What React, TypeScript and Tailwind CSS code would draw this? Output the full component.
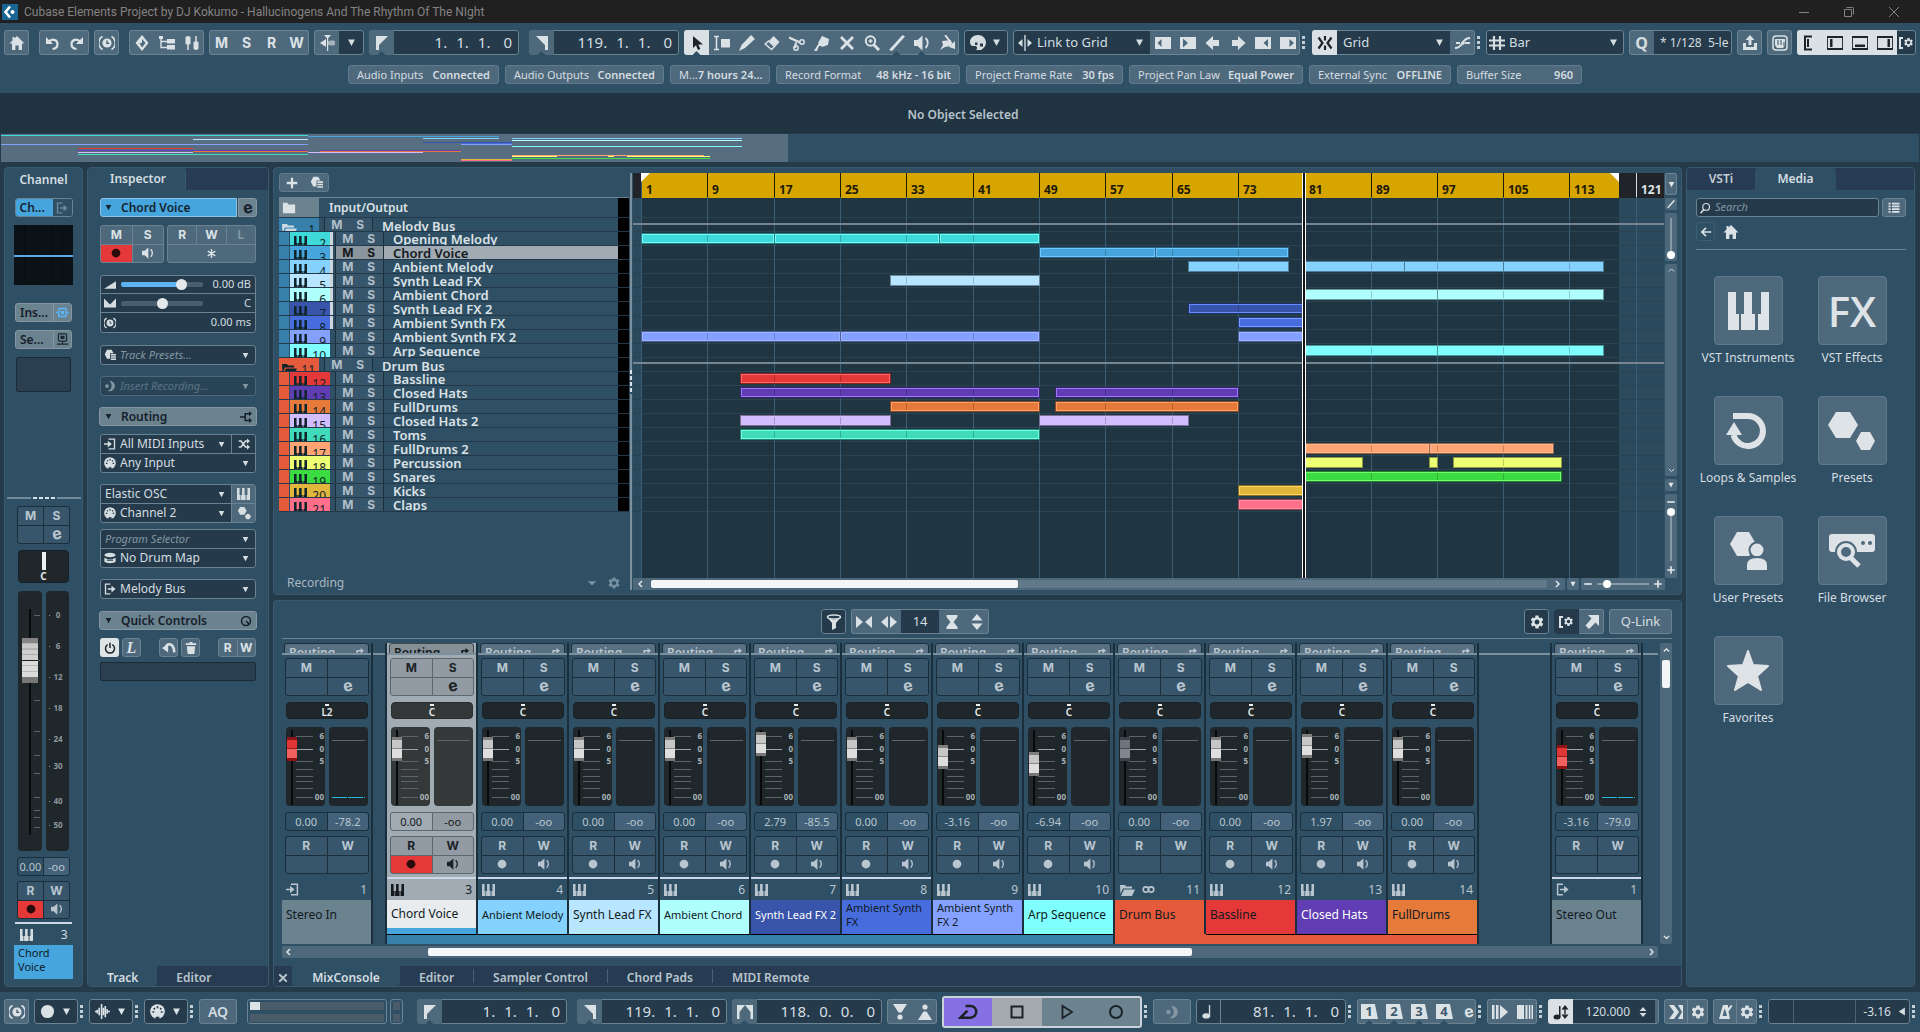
import React from 'react';
import { MdSettings } from 'react-icons/md';

/* ------------------------------------------------------------------ */
/* Icons                                                               */
/* ------------------------------------------------------------------ */

const line = { fill: 'none', stroke: 'currentColor' };

const ICONS: Record<string, React.ReactNode> = {
  home: <path d="M8 1l7.500 7.500H13V15H9.600v-4.500H6.400V15H3V8.500H.5L3.500 5.500V2H5.500v1.500z" />,
  undo: (
    <>
      <path d="M2 2v7h7L6.600 6.600 3 3z" />
      <path d="M5 7c2-3.500 8.500-3 8.500 2 0 3-2 4.800-5 5" strokeWidth="2.200" {...line} />
    </>
  ),
  redo: (
    <>
      <path d="M14 2v7H7l2.400-2.400L13 3z" />
      <path d="M11 7C9 3.500 2.500 4 2.500 9c0 3 2 4.800 5 5" strokeWidth="2.200" {...line} />
    </>
  ),
  delay: (
    <>
      <circle cx="8" cy="8" r="4.600" />
      <path d="M8 5.500V8.300h2.200" stroke="#344f61" fill="none" strokeWidth="1.200" />
      <path d="M3.500 1.500a7.500 7.500 0 0 0 0 13M12.500 1.500a7.500 7.500 0 0 1 0 13" strokeWidth="1.700" {...line} />
    </>
  ),
  diamond: <path fillRule="evenodd" d="M8 0l6.500 8L8 16 1.500 8zM8 4v4L5.500 8 8 12.500 11.500 8z" />,
  tree: (
    <>
      <path d="M8 4h8v4.500H8zM8 10h8v4.500H8zM0 1h4v3H0z" />
      <path d="M2 3v9.500h6M2 6.500h6" strokeWidth="1.400" {...line} />
    </>
  ),
  mixer: (
    <>
      <path d="M4 1v14M12 1v14" strokeWidth="1.500" {...line} />
      <rect x="1.500" y="1.500" width="5" height="8" rx="1" />
      <rect x="9.500" y="6.500" width="5" height="8" rx="1" />
    </>
  ),
  autoscroll: (
    <>
      <path d="M7 4v8L1 8zM5 0h7L8.500 4zM8 3h1.200v13H8z" />
      <path d="M10 6v4M12 5.500v5M14 5.500v5M16 6v4" strokeWidth="1.200" {...line} />
    </>
  ),
  left: <path d="M2 1h12L5 10v5H2z" />,
  right: <path d="M14 1H2l9 9v5h3z" />,
  arrow: <path d="M4 1v12l3-2.800 2 4.800 2.300-1-2-4.600H14z" />,
  range: (
    <>
      <path d="M0 1.500h5M0 14.500h5M2.500 1.500v13" strokeWidth="1.600" {...line} />
      <path d="M7 4h9v8.500H7z" />
    </>
  ),
  pencil: <path d="M12 0l4 4L6 13 0 16l2.500-6z" />,
  eraser: (
    <>
      <path d="M9.500 1 15.500 7l-4 4.500-6.500-5.500z" />
      <path d="M4.500 6 10.500 11.500 7.500 14.500 1.200 9z" strokeWidth="1.500" {...line} />
    </>
  ),
  scissors: (
    <>
      <path d="M0 2.500l11 5M7 7.500 6 13" strokeWidth="2.200" {...line} />
      <circle cx="13" cy="7" r="2.200" strokeWidth="1.500" {...line} />
      <circle cx="7" cy="13" r="2.200" strokeWidth="1.500" {...line} />
    </>
  ),
  glue: <path d="M8 1l7 3-1 6-6 2-4-4zM5 8l3 3-3 0-2 5H0l3-5z" />,
  mute: <path d="M3 1 8 6l5-5 2 2L10 8l5 5-2 2L8 10l-5 5-2-2L6 8 1 3z" />,
  zoom: (
    <>
      <circle cx="6.500" cy="6" r="4.700" strokeWidth="2" {...line} />
      <path d="M9.500 9.500 15 15" strokeWidth="3" {...line} />
      <path d="M6.500 4v4M4.500 6h4" strokeWidth="1.500" {...line} />
    </>
  ),
  draw: <path d="M0 15 13.500 0 16 1.500 3 16z" />,
  speaker: (
    <>
      <path d="M0 5h3.500l5-4.500v15l-5-4.500H0z" />
      <path d="M11.500 3c3 2.500 3 7.500 0 10" strokeWidth="1.800" {...line} />
    </>
  ),
  warp: (
    <>
      <path d="M3 6l9-1 0 6-6 1-5 3 3-5z" />
      <path d="M6 0l7 9" strokeWidth="2" {...line} />
      <path d="M16 6v8l-6-2z" />
    </>
  ),
  palette: (
    <path
      fillRule="evenodd"
      d="M8 0c4.500 0 8 3.500 8 7.500 0 3-2 5.500-5 7.500H6c1.500-1 1.500-3 0-4H3c-2 0-3-2-3-4C0 3 3.500 0 8 0zM10 8.500v3h3v-3zM5 7.500V10h2.500V7.500z"
    />
  ),
  link: <path d="M5.500 4v8L1 8zM7.300 0h1.400v16H7.300zM10.500 4v8L15 8z" />,
  nudge1: <path fillRule="evenodd" d="M0 2h16v12H0zM2.500 8l4 4V4z" />,
  nudge2: <path fillRule="evenodd" d="M0 2h16v12H0zM8 8 3 3.500v9z" />,
  nudge3: <path d="M.5 8 8 1v4h6v6H8v4z" />,
  nudge4: <path d="M15.500 8 8 1v4H2v6h6v4z" />,
  nudge5: <path fillRule="evenodd" d="M0 2h16v12H0zM8.500 8l4.500 4V4z" />,
  nudge6: <path fillRule="evenodd" d="M0 2h16v12H0zM14 8 9.500 4v8z" />,
  snap: (
    <>
      <path d="M1.500 2.500 5.500 8l-4 5.500M14.500 2.500 10.500 8l4 5.500" strokeWidth="2.200" {...line} />
      <path d="M8 1v4.500M8 10.500V15" strokeWidth="2.200" {...line} />
    </>
  ),
  curve: (
    <>
      <path d="M0 13c9 0 6-10 15-10M1 8h4M10 8h5" strokeWidth="2" {...line} />
      <circle cx="8" cy="8" r="1.800" />
    </>
  ),
  hash: <path d="M5 1v14M11 1v14M0 5.500h16M0 10.500h16" strokeWidth="2.200" {...line} />,
  share: (
    <>
      <path d="M8 0l4.500 5h-3v5h-3V5h-3z" />
      <path d="M1 8h3v4h8V8h3v7H1z" />
    </>
  ),
  setup: (
    <>
      <rect x="1" y="1" width="14" height="14" rx="3" strokeWidth="1.500" {...line} />
      <path d="M3 4h10v6l-2 3H5l-2-3z" />
      <path d="M6 5v5M9 5v5M12 7v4" stroke="#4f697c" fill="none" strokeWidth="1.200" />
    </>
  ),
  zoneCh: <path d="M10 1.500H3v13h7M6 4v8" strokeWidth="2" {...line} />,
  zoneL: (
    <>
      <path d="M0 2h16v12H0z" strokeWidth="1.800" {...line} />
      <path d="M3 4h2.500v8H3z" />
    </>
  ),
  zoneB: (
    <>
      <path d="M0 2h16v12H0z" strokeWidth="1.800" {...line} />
      <path d="M3 9.500h10V12H3z" />
    </>
  ),
  zoneR: (
    <>
      <path d="M0 2h16v12H0z" strokeWidth="1.800" {...line} />
      <path d="M10.500 4H13v8h-2.500z" />
    </>
  ),
  caret: <path d="M3 3.500h10L8 13z" />,
  caretWide: <path d="M1 5h14l-7 7z" />,
  plus: <path d="M6.700 2h2.600v4.700H14v2.600H9.300V14H6.700V9.300H2V6.700h4.700z" />,
  minus: <path d="M2 6.700h12v2.600H2z" />,
  presetAdd: (
    <>
      <path d="M4 1h6l3 4.500H8V13H4L1 7z" />
      <path d="M9 6.500h7V8.500H9zM9 9.500h7v2H9zM9 12.500h7v2H9z" />
    </>
  ),
  folder: <path d="M1 2h5l1.500 2H15v10H1z" />,
  folderOpen: (
    <>
      <path d="M1 3h5l1 1.500h6V6.500H4L1.500 12z" />
      <path d="M5 7.500h11L13 14H2z" />
    </>
  ),
  exit: (
    <>
      <path d="M8.500 1.500H2v13h6.500" strokeWidth="1.800" {...line} />
      <path d="M5 7h5V3.500L15.500 8 10 12.500V9H5z" />
    </>
  ),
  enter: (
    <>
      <path d="M6 1.500h8v13H6" strokeWidth="1.800" {...line} />
      <path d="M0 7h5V3.500L10.500 8 5 12.500V9H0z" />
    </>
  ),
  insert: (
    <>
      <rect x="3.500" y="3" width="9" height="10" rx="1" strokeWidth="1.800" {...line} />
      <path d="M6 6h4v4H6zM0 7h2v2H0zM14 7h2v2h-2z" />
    </>
  ),
  send: (
    <>
      <rect x="3" y="1" width="10" height="9" rx="1" strokeWidth="1.500" {...line} />
      <path d="M5.500 3.500h5v4h-5zM7.300 10h1.400v3H7.300zM1 13h14v1.500H1z" />
    </>
  ),
  star6: <path d="M8 1.500v13M2.500 4.500l11 7M13.500 4.500l-11 7" strokeWidth="2" {...line} />,
  ramp: <path d="M0 13 16 3v10z" />,
  pan: <path d="M0 2l8 8 8-8v12H0z" />,
  shuffle: (
    <>
      <path d="M1 4h3l6 8h3M1 12h3l6-8h3" strokeWidth="2" {...line} />
      <path d="M12 .5l4 3.500-4 3.500zM12 8.500l4 3.500-4 3.500z" />
    </>
  ),
  route: (
    <>
      <path d="M0 8h6M13 3.500H7v9h6" strokeWidth="2" {...line} />
      <path d="M12 0l4 3.500-4 3.500zM12 9l4 3.500-4 3.500z" />
    </>
  ),
  routeSmall: (
    <>
      <path d="M1 14h5V7h6" strokeWidth="2.200" {...line} />
      <path d="M11 3l5 4-5 4z" />
    </>
  ),
  midi: (
    <>
      <circle cx="8" cy="8" r="7.800" />
      <path d="M2.500 8.500h2M11.500 8.500h2M4 4.500l1.200 1.200M12 4.500l-1.200 1.200M8 2.500v2" stroke="#253b4b" strokeWidth="1.800" />
      <path d="M6 13.500h4V16H6z" fill="#253b4b" />
    </>
  ),
  presets: (
    <>
      <path d="M3.500 1h5L11 5.500 8.500 10h-5L1 5.500z" />
      <path d="M11 9h3l2 3-2 3h-3l-2-3z" />
    </>
  ),
  drum: (
    <>
      <ellipse cx="8" cy="4" rx="7.500" ry="3" />
      <path d="M.5 7.500c3 2.500 12 2.500 15 0V13c-3 2.500-12 2.500-15 0z" />
      <path d="M4 10h8v1.500H4z" fill="#253b4b" />
    </>
  ),
  knob: (
    <>
      <circle cx="8" cy="8" r="6" strokeWidth="2" {...line} />
      <path d="M8 8l4 4" strokeWidth="2.200" {...line} />
    </>
  ),
  power: <path d="M5 3.500a6 6 0 1 0 6 0M8 1v7" strokeWidth="2" {...line} />,
  back: (
    <>
      <path d="M0 8 7 3.500V13z" />
      <path d="M4.500 8c0-6 9-7 9.500 5" strokeWidth="3" {...line} />
    </>
  ),
  trash: <path d="M6 0h4v1.500h5v2.500H1V1.500h5zM2.500 5.500h11L12.500 16h-9z" />,
  insertRec: (
    <>
      <path d="M7 1a7 7 0 1 1-2 13.500c4-1.500 5-4 5-6.500S9 2.500 7 1z" />
      <circle cx="4" cy="8" r="2.500" />
    </>
  ),
  filter: (
    <>
      <ellipse cx="8" cy="3" rx="6.500" ry="2" strokeWidth="1.500" {...line} />
      <path d="M1.500 3.500 6 9v7l4-2V9l4.500-5.500L8 6z" />
    </>
  ),
  narrow: <path d="M0 2v12l7-6zM16 2v12L9 8z" />,
  widen: <path d="M7 2v12L0 8zM9 2v12l7-6z" />,
  hourglass: <path d="M2.500 1h11v2L9.500 8l4 5v2h-11v-2l4-5-4-5z" />,
  updown: <path d="M8 0l5.500 6.500h-11zM8 16l5.500-6.500h-11z" />,
  popout: <path d="M4 1h11v11l-3.500-3.500L5 15l-3.500-3.500L7.500 4.500z" />,
  search: (
    <>
      <circle cx="9.500" cy="6.500" r="4.500" strokeWidth="1.600" {...line} />
      <path d="M6.500 10 2 15" strokeWidth="2.200" {...line} />
    </>
  ),
  list: <path d="M0 1h3v2.500H0zM5 1h11v2.500H5zM0 5h3v2.500H0zM5 5h11v2.500H5zM0 9h3v2.500H0zM5 9h11v2.500H5zM0 13h3v2.500H0zM5 13h11v2.500H5z" />,
  arrowLeft: <path d="M15 8H3M8 2.500 2.500 8 8 13.500" strokeWidth="2.200" {...line} />,
  close: <path d="M2 2l12 12M14 2 2 14" strokeWidth="3" {...line} />,
  circle: <circle cx="8" cy="8" r="7" />,
  wave: <path d="M0 8h2M2.500 6v4M4.500 4v8M7 0v16M9 4v8M11 2v12M13 5.500v5M14 8h2" strokeWidth="1.700" {...line} />,
  both: <path d="M0 1h8L2.500 8v7H0zM16 1H8l5.500 7v7H16z" />,
  punchIn: (
    <>
      <path d="M1 0h14l-5.500 8.500h-3z" />
      <circle cx="8" cy="13" r="2.600" />
    </>
  ),
  punchOut: (
    <>
      <path d="M1 16h14L9.500 7.500h-3z" />
      <circle cx="8" cy="3" r="2.600" />
    </>
  ),
  cycle: <path d="M6 3.200h4a4.600 4.600 0 0 1 0 9.300H2L7.500 7" strokeWidth="2" {...line} />,
  stop: <path d="M2.500 2.500h11v11h-11z" strokeWidth="2" {...line} />,
  play: <path d="M3.500 2v12L13 8z" strokeWidth="1.800" {...line} />,
  record: <circle cx="8" cy="8" r="6" strokeWidth="2" {...line} />,
  note: (
    <>
      <ellipse cx="6" cy="12.500" rx="4.500" ry="3" />
      <path d="M9 0h1.500v13H9z" />
    </>
  ),
  markPlay: <path d="M0 1h2.500v14H0zM4 1h2.500v14H4zM8 1l8 7-8 7z" />,
  markBars: <path d="M0 1h7v14H0zM8.500 1h2v14h-2zM11.800 1h1.600v14h-1.600zM14.500 1H16v14h-1.500z" />,
  tempo: (
    <>
      <ellipse cx="4" cy="13" rx="3.500" ry="2.500" />
      <path d="M6 2h1.500v11H6zM12 1l3.500 4.500h-7zM12 15l3.500-4.500h-7zM11.300 5h1.400v6h-1.400z" />
    </>
  ),
  precount: <path d="M1 1h5l5 7-5 7H1l5-7zM10 1h5v14h-5l4-7z" />,
  metronome: <path fillRule="evenodd" d="M6 1h5v3l3-3 1.500 1-4 5.500L13 15H2zM7.500 4.500 5.500 12h4.500L9 8z" />,
  tri: <path d="M14 1v14L3 8z" />,
  infinity: (
    <>
      <circle cx="4.800" cy="8" r="3.300" strokeWidth="2" {...line} />
      <circle cx="11.200" cy="8" r="3.300" strokeWidth="2" {...line} />
    </>
  ),
};

function Icon({ name, className = 'size-4' }: { name: string; className?: string }) {
  if (name === 'gear') return <MdSettings className={`shrink-0 ${className}`} aria-hidden="true" />;
  if (name === 'zoneGear') {
    return (
      <span className="flex items-center" aria-hidden="true">
        <span className="h-3 w-1 border-2 border-r-0 border-current" />
        <MdSettings className="size-[11px] shrink-0" />
      </span>
    );
  }
  return (
    <svg viewBox="0 0 16 16" className={`shrink-0 ${className}`} fill="currentColor" aria-hidden="true">
      {ICONS[name]}
    </svg>
  );
}

function Piano({ className }: { className: string }) {
  return (
    <svg viewBox="0 0 41 38" preserveAspectRatio="none" className={`shrink-0 ${className}`} fill="currentColor" aria-hidden="true">
      <path d="M0 0h8v22h3v16H0zM16 0h8v22h3v16H13V22h3zM33 0h8v38H30V22h3z" />
    </svg>
  );
}

/* ------------------------------------------------------------------ */
/* Data                                                                */
/* ------------------------------------------------------------------ */

interface Track {
  n: number;
  name: string;
  color: string;
  edge?: string;
  bus?: boolean;
  out?: boolean;
  clips: [number, number][];
}

const TRACKS: Track[] = [
  { n: 1, name: 'Melody Bus', color: '#3680ab', bus: true, clips: [] },
  { n: 2, name: 'Opening Melody', color: '#40d9d9', edge: '#73fafa', out: true, clips: [[1, 17], [17, 37], [37, 49]] },
  { n: 3, name: 'Chord Voice', color: '#47a5de', edge: '#70c8ff', out: true, clips: [[49, 63], [63, 79]] },
  { n: 4, name: 'Anbient Melody', color: '#85d2ff', edge: '#85d2ff', out: true, clips: [[67, 79], [81, 93], [93, 105], [105, 117]] },
  { n: 5, name: 'Synth Lead FX', color: '#b8e5ff', edge: '#b8e5ff', out: true, clips: [[31, 49]] },
  { n: 6, name: 'Ambient Chord', color: '#b0ffff', edge: '#b0ffff', out: true, clips: [[81, 97], [97, 117]] },
  { n: 7, name: 'Synth Lead FX 2', color: '#3855ab', edge: '#668aff', out: true, clips: [[67, 81]] },
  { n: 8, name: 'Ambient Synth FX', color: '#476cde', edge: '#7a9cff', out: true, clips: [[73, 81]] },
  { n: 9, name: 'Ambient Synth FX 2', color: '#85a1ff', edge: '#9db4ff', clips: [[1, 25], [25, 49], [73, 81]] },
  { n: 10, name: 'Arp Sequence', color: '#80ffff', edge: '#80ffff', clips: [[81, 97], [97, 117]] },
  { n: 11, name: 'Drum Bus', color: '#e55a3b', bus: true, clips: [] },
  { n: 12, name: 'Bassline', color: '#e53838', edge: '#ff6b6b', clips: [[13, 31]] },
  { n: 13, name: 'Closed Hats', color: '#613db3', edge: '#9d75ff', clips: [[13, 49], [51, 73]] },
  { n: 14, name: 'FullDrums', color: '#e57a3b', edge: '#ffa36b', clips: [[31, 49], [51, 73]] },
  { n: 15, name: 'Closed Hats 2', color: '#d2bdff', edge: '#d2bdff', clips: [[13, 31], [49, 67]] },
  { n: 16, name: 'Toms', color: '#40dbba', edge: '#70ffe0', clips: [[13, 49]] },
  { n: 17, name: 'FullDrums 2', color: '#ffa573', edge: '#ffb68c', clips: [[81, 96], [96, 111]] },
  { n: 18, name: 'Percussion', color: '#edff73', edge: '#edff73', clips: [[81, 88], [96, 97], [99, 112]] },
  { n: 19, name: 'Snares', color: '#3bdb42', edge: '#6fff70', clips: [[81, 112]] },
  { n: 20, name: 'Kicks', color: '#e0b63b', edge: '#ffd466', clips: [[73, 81]] },
  { n: 21, name: 'Claps', color: '#ff6f8a', edge: '#ff8fa5', clips: [[73, 81]] },
];

const BAR_LABELS = [1, 9, 17, 25, 33, 41, 49, 57, 65, 73, 81, 89, 97, 105, 113, 121];

// canvas x of a bar line
const barX = (bar: number) => 8 + Math.round((bar - 1) * 8.29);
const overX = (bar: number) => Math.round((bar - 1) * 6.388);

interface Strip {
  n: number;
  name: string;
  color: string;
  text?: string;
  size?: string;
  level?: number;
  gain?: string;
  peak?: string;
  folder?: string;
  line?: boolean;
  kind?: 'in' | 'out' | 'bus';
}

const BLUE = '#3680ab';
const ORANGE = '#e55a3b';

const STRIPS: Strip[] = [
  { n: 3, name: 'Chord Voice', color: '#e8ecef', line: true, folder: BLUE },
  { n: 4, name: 'Anbient Melody', color: '#85d2ff', size: 'text-[11px]', line: true, folder: BLUE },
  { n: 5, name: 'Synth Lead FX', color: '#b8e5ff', line: true, folder: BLUE },
  { n: 6, name: 'Ambient Chord', color: '#b0ffff', size: 'text-[11px]', line: true, folder: BLUE },
  { n: 7, name: 'Synth Lead FX 2', color: '#3855ab', text: 'text-white', size: 'text-[11px]', level: 94, gain: '2.79', peak: '-85.5', line: true, folder: BLUE },
  { n: 8, name: 'Ambient Synth FX', color: '#476cde', size: 'text-[11px]', line: true, folder: BLUE },
  { n: 9, name: 'Ambient Synth FX 2', color: '#85a1ff', size: 'text-[11px]', level: 69, gain: '-3.16', folder: BLUE },
  { n: 10, name: 'Arp Sequence', color: '#80ffff', level: 55, gain: '-6.94', folder: BLUE },
  { n: 11, name: 'Drum Bus', color: ORANGE, kind: 'bus', folder: ORANGE },
  { n: 12, name: 'Bassline', color: '#e53838', folder: ORANGE },
  { n: 13, name: 'Closed Hats', color: '#613db3', text: 'text-white', level: 90, gain: '1.97', folder: ORANGE },
  { n: 14, name: 'FullDrums', color: '#e57a3b', folder: ORANGE },
];

const STEREO_IN: Strip = { n: 1, name: 'Stereo In', color: '#6b828f', kind: 'in', peak: '-78.2' };
const STEREO_OUT: Strip = { n: 1, name: 'Stereo Out', color: '#6b828f', kind: 'out', level: 69, gain: '-3.16', peak: '-79.0', line: true };

/* ------------------------------------------------------------------ */
/* Small building blocks                                               */
/* ------------------------------------------------------------------ */

const FRAME = 'flex h-[25px] shrink-0 overflow-hidden rounded-[3px] outline outline-1 -outline-offset-1 outline-[#6a8291]';

function Group({ children, className = '' }: { children: React.ReactNode; className?: string }) {
  return <div className={`${FRAME} bg-[#4f697c] ${className}`}>{children}</div>;
}

function Notch() {
  return <span className="absolute bottom-0 left-1/2 h-1 w-2 -translate-x-1/2 bg-[#2f4f64] [clip-path:polygon(50%_0,100%_100%,0_100%)]" />;
}

function Tool({ icon, label, on, notch, className = 'w-[25px]' }: { icon?: string; label: string; on?: boolean; notch?: boolean; className?: string }) {
  return (
    <button
      type="button"
      aria-label={label}
      className={`relative flex items-center justify-center ${className} ${on ? 'bg-[#d9e1e4] text-[#1d2529]' : 'text-[#dbe2e6]'}`}
    >
      {icon ? <Icon name={icon} /> : <span className="font-['Inter'] text-[14px] font-bold">{label}</span>}
      {notch && <Notch />}
    </button>
  );
}

function Dots() {
  return (
    <span className="-ml-[3px] flex w-1 shrink-0 flex-col gap-[2px] self-center">
      <i className="size-[3px] bg-[#c3ced5]" />
      <i className="size-[3px] bg-[#c3ced5]" />
      <i className="size-[3px] bg-[#c3ced5]" />
    </span>
  );
}

function Time({ icon, label, parts }: { icon: string; label: string; parts: string[] }) {
  return (
    <div className={`${FRAME} w-[150px] bg-[#253b4b]`}>
      <span className="relative flex w-[25px] items-center justify-center bg-[#4f697c] text-[#dbe2e6]">
        <Icon name={icon} />
        <Notch />
      </span>
      <div aria-label={label} className="flex flex-1 items-center justify-end gap-[9px] pr-[7px] text-[15px] leading-none text-[#d5dde1]">
        {parts.map((p, i) => (
          <span key={i} className={i === 3 ? 'ml-1' : ''}>{p}</span>
        ))}
      </div>
    </div>
  );
}

function Select({ label, value, className = '', arrow = 'size-[9px]' }: { label: string; value: string; className?: string; arrow?: string }) {
  return (
    <label className={`flex min-w-0 flex-1 items-center ${className}`}>
      <select aria-label={label} className="min-w-0 flex-1 appearance-none bg-transparent outline-none" defaultValue={value}>
        <option>{value}</option>
      </select>
      <Icon name="caret" className={`pointer-events-none mr-[5px] ${arrow}`} />
    </label>
  );
}

/* ------------------------------------------------------------------ */
/* Top area                                                            */
/* ------------------------------------------------------------------ */

function TitleBar() {
  return (
    <header className="flex h-[23px] items-center bg-[#202020] pl-[2px] text-[#838383]">
      <svg viewBox="0 0 16 16" className="size-4" aria-hidden="true">
        <rect width="16" height="16" fill="#1b6594" />
        <path d="M8 2.500 3.500 8 8 13.500" stroke="#fff" strokeWidth="2.600" fill="none" />
        <circle cx="10.500" cy="8" r="2" fill="#fff" />
      </svg>
      <span className="ml-[6px] flex-1 font-['Roboto'] text-[12px]">Cubase Elements Project by DJ Kokumo - Hallucinogens And The Rhythm Of The NIght</span>
      <button type="button" aria-label="Minimize" className="flex w-[45px] justify-center">
        <svg viewBox="0 0 10 10" className="size-[10px]" stroke="currentColor"><path d="M0 5.500h10" /></svg>
      </button>
      <button type="button" aria-label="Restore" className="flex w-[45px] justify-center">
        <svg viewBox="0 0 10 10" className="size-[10px]" stroke="currentColor" fill="none"><path d="M.5 2.500h7v7h-7zM2.500.5h6a1 1 0 0 1 1 1v6" /></svg>
      </button>
      <button type="button" aria-label="Close" className="mr-1 flex w-[45px] justify-center">
        <svg viewBox="0 0 10 10" className="size-[10px]" stroke="currentColor"><path d="M0 0l10 10M10 0 0 10" /></svg>
      </button>
    </header>
  );
}

const TOOLS = ['arrow', 'range', 'pencil', 'eraser', 'scissors', 'glue', 'mute', 'zoom', 'draw', 'speaker', 'warp'];
const NUDGES = ['nudge1', 'nudge2', 'nudge3', 'nudge4', 'nudge5', 'nudge6'];

const STATUS = [
  ['Audio Inputs', 'Connected', 'w-[151px]'],
  ['Audio Outputs', 'Connected', 'w-[159px]'],
  ['M...', '7 hours 24...', 'w-[100px]'],
  ['Record Format', '48 kHz - 16 bit', 'w-[184px]'],
  ['Project Frame Rate', '30 fps', 'w-[157px]'],
  ['Project Pan Law', 'Equal Power', 'w-[174px]'],
  ['External Sync', 'OFFLINE', 'w-[142px]'],
  ['Buffer Size', '960', 'w-[125px]'],
];

function Toolbar() {
  return (
    <div className="h-[70px] bg-[#2f4f64] pt-[7px]">
      <div className="flex gap-[5px] overflow-hidden px-1 text-[13px] text-[#d5dde1]">
        <Group><Tool icon="home" label="Project home" /></Group>
        <Group className="ml-[5px]"><Tool icon="undo" label="Undo" /><Tool icon="redo" label="Redo" /></Group>
        <Group><Tool icon="delay" label="Delay compensation" /></Group>
        <Group className="ml-[5px]">
          <Tool icon="diamond" label="Visibility" />
          <Tool icon="tree" label="Tree" />
          <Tool icon="mixer" label="MixConsole" />
        </Group>
        <Group>
          <Tool label="M" /><Tool label="S" /><Tool label="R" /><Tool label="W" />
        </Group>
        <Group>
          <Tool icon="autoscroll" label="Auto-scroll" />
          <button type="button" aria-label="Auto-scroll settings" className="flex w-[25px] items-center justify-center bg-[#253b4b]">
            <Icon name="caret" className="size-[11px]" />
          </button>
        </Group>
        <Time icon="left" label="Left locator" parts={['1.', '1.', '1.', '0']} />
        <div className="ml-[5px]"><Time icon="right" label="Right locator" parts={['119.', '1.', '1.', '0']} /></div>
        <Group>
          {TOOLS.map((t, i) => (
            <Tool key={t} icon={t} label={t} on={i === 0} notch={i === 0 || i === 8 || i === 9} />
          ))}
        </Group>
        <div className={`${FRAME} w-[44px] items-center justify-around bg-[#253b4b] px-1`}>
          <Icon name="palette" />
          <Icon name="caret" className="size-[11px]" />
        </div>
        <Group>
          <div className="flex w-[137px] items-center gap-1 bg-[#253b4b] pl-1">
            <Icon name="link" />
            <Select label="Nudge mode" value="Link to Grid" arrow="size-[11px]" />
          </div>
          {NUDGES.map(t => <Tool key={t} icon={t} label={t} />)}
        </Group>
        <Dots />
        <Group className="ml-px">
          <Tool icon="snap" label="Snap" on />
          <Select label="Snap type" value="Grid" className="w-[113px] bg-[#253b4b] pl-[6px]" arrow="size-[11px]" />
          <Tool icon="curve" label="Snap to zero crossing" />
        </Group>
        <Dots />
        <div className={`${FRAME} w-[138px] items-center gap-1 bg-[#253b4b] pl-[3px]`}>
          <Icon name="hash" />
          <Select label="Grid type" value="Bar" arrow="size-[11px]" />
        </div>
        <div className={`${FRAME} w-[103px] bg-[#253b4b]`}>
          <span className="flex w-[25px] items-center justify-center bg-[#4f697c] text-[16px] font-bold leading-none">Q</span>
          <span className="flex flex-1 items-center overflow-hidden whitespace-pre pl-[6px] text-[12px]">* 1/128  5-le</span>
        </div>
        <Group><Tool icon="share" label="Export" /></Group>
        <Group><Tool icon="setup" label="Setup" /></Group>
        <div className={`${FRAME} flex-1 bg-[#253b4b]`}>
          <Tool icon="zoneCh" label="Channel zone" on />
          <Tool icon="zoneL" label="Left zone" on />
          <Tool icon="zoneB" label="Lower zone" on />
          <Tool icon="zoneR" label="Right zone" on />
          <Tool icon="zoneGear" label="Set up window layout" className="flex-1" />
        </div>
      </div>
      <div className="mt-[10px] flex justify-center gap-[6px] pl-[10px] text-[11px] text-[#d5dde1]">
        {STATUS.map(([name, value, width]) => (
          <div key={name} className={`flex h-[19px] items-center justify-between whitespace-nowrap rounded-[3px] border border-[#617b8c] bg-[#4f697c] px-2 leading-none ${width}`}>
            <span>{name}</span>
            <span className="font-semibold">{value}</span>
          </div>
        ))}
      </div>
    </div>
  );
}

function Overview() {
  return (
    <div className="mx-px mt-px h-7 bg-[#2f4f64]">
      <svg width="788" height="28" aria-label="Project overview">
        <rect width="787" height="28" fill="#576e80" />
        {TRACKS.map(t =>
          t.clips.map(([a, b]) => (
            <rect key={`${t.n}-${a}`} x={overX(a)} y={1 + Math.round((t.n - 2) * 1.34)} width={overX(b) - overX(a)} height="1" fill={t.color} />
          )),
        )}
      </svg>
    </div>
  );
}

/* ------------------------------------------------------------------ */
/* Left zone                                                           */
/* ------------------------------------------------------------------ */

const PANEL = 'rounded-[4px] border border-[#385a70] bg-[#2f4f64]';
const THUMB =
  '[&::-webkit-slider-thumb]:size-[11px] [&::-webkit-slider-thumb]:appearance-none [&::-webkit-slider-thumb]:rounded-full [&::-webkit-slider-thumb]:bg-[#e3e8ea]';
const VERTICAL = 'appearance-none bg-transparent [direction:rtl] [writing-mode:vertical-lr] [&::-webkit-slider-thumb]:appearance-none';

function Cell({ children, className = '', label }: { children?: React.ReactNode; className?: string; label?: string }) {
  return (
    <button type="button" aria-label={label} className={`flex items-center justify-center overflow-hidden font-['Inter'] text-[12px] font-bold leading-none ${className}`}>
      {children}
    </button>
  );
}

const EditMark = () => <span className="-rotate-12 pb-[2px] text-[16px] leading-none">e</span>;

/** 2x2 block of channel buttons */
function Quad({ cells, light, className = '' }: { cells: React.ReactNode[]; light?: boolean; className?: string }) {
  return (
    <div className={`grid h-[38px] grid-cols-2 grid-rows-2 gap-px overflow-hidden rounded-[3px] border ${light ? 'border-[#5d676e] bg-[#5d676e] text-[#1c2327]' : 'border-[#1b2e3b] bg-[#1b2e3b] text-[#b9c6cf]'} ${className}`}>
      {cells.map((c, i) => (
        <Cell key={i} label={`button ${i + 1}`} className={c === 'rec' ? 'bg-[#e53838] text-[#2a0b0b]' : light ? 'bg-[#929ba3]' : 'bg-[#37556b]'}>
          {c === 'rec' ? <Icon name="circle" className="size-[10px]" /> : c}
        </Cell>
      ))}
    </div>
  );
}

const METER_TICKS: [number, string][] = [[24, '0'], [55, '6'], [86, '12'], [117, '18'], [148, '24'], [175, '30'], [210, '40'], [234, '50']];

function ChannelZone() {
  return (
    <aside className={`${PANEL} flex w-[79px] shrink-0 flex-col items-center pb-[7px]`}>
      <h2 className="mt-1 text-[12px] font-semibold leading-[16px] text-[#d5dde1]">Channel</h2>
      <div className="mt-[10px] flex h-[19px] w-[58px] overflow-hidden rounded-[3px] border border-[#6a8291] text-[12px] font-semibold">
        <button type="button" className="w-[37px] bg-[#47a5de] pl-1 text-left leading-none text-[#15232d]">Ch...</button>
        <button type="button" aria-label="Output" className="flex flex-1 items-center justify-center bg-[#2f4f64] text-[#6f8796]"><Icon name="exit" className="size-3" /></button>
      </div>
      <svg width="59" height="60" className="mt-2" aria-label="EQ curve">
        <rect width="59" height="60" fill="#0b1216" />
        <path d="M10.500 0v60M20.500 0v60M38.500 0v60M48.500 0v60" stroke="#080d10" />
        <path d="M0 31h59" stroke="#5aa9e6" strokeWidth="2" />
      </svg>
      {[['Ins...', 'insert', 'text-[#58b8ff]', 'mt-[18px]'], ['Se...', 'send', 'text-[#1c2a33]', 'mt-2']].map(([t, icon, tone, gap]) => (
        <div key={t} className={`flex h-[19px] w-[57px] overflow-hidden rounded-[3px] border border-[#8497a2] bg-[#6b828f] text-[12px] font-semibold ${gap}`}>
          <button type="button" className="w-[38px] border-r border-[#8497a2] pl-1 text-left leading-none text-[#15202a]">{t}</button>
          <button type="button" aria-label={`${t} bypass`} className={`flex flex-1 items-center justify-center ${tone}`}><Icon name={icon} className="size-[13px]" /></button>
        </div>
      ))}
      <div className="mt-2 h-[35px] w-[55px] rounded-[2px] border border-[#1b2a35] bg-[#2a3f50]" />
      <div className="flex-1" />
      <div className="flex w-full items-center justify-center gap-[2px]">
        <span className="h-[2px] w-6 bg-[#718a9a]" />
        <span className="h-[2px] w-[22px] bg-[repeating-linear-gradient(90deg,#dbe2e6_0_4px,transparent_4px_6px)]" />
        <span className="h-[2px] w-6 bg-[#718a9a]" />
      </div>
      <Quad className="mt-[7px] w-[53px]" cells={['M', 'S', '', <EditMark key="e" />]} />
      <div className="mt-[6px] flex h-[33px] w-[51px] flex-col items-center rounded-[4px] border border-[#16202a] bg-[#20272b] pt-px text-[10px] font-bold leading-[12px] text-[#e1e6e9]">
        <span className="h-[18px] w-1 bg-[#eceff0]" />C
      </div>
      <div className="mt-2 flex gap-1">
        <div className="grid h-[260px] w-6 rounded-[4px] bg-[#1f272a]">
          <svg width="24" height="260" className="[grid-area:1/1]">
            <path d="M12 18v226" stroke="#07090b" strokeWidth="2" />
            <path d="M16 24.500h6M16 69.500h6M16 109.500h6M16 140.500h6M16 164.500h6M16 182.500h6M16 206.500h6M16 219.500h6M16 226.500h6M16 236.500h6" stroke="#5a6469" />
          </svg>
          <input
            type="range"
            aria-label="Channel volume"
            defaultValue={84}
            className={`mt-[18px] h-[226px] w-4 justify-self-center [grid-area:1/1] ${VERTICAL} [&::-webkit-slider-thumb]:h-[45px] [&::-webkit-slider-thumb]:w-4 [&::-webkit-slider-thumb]:bg-[linear-gradient(#858585_0_5px,#b5b5b5_5px_6px,#c9c9c9_6px_10px,#b4b4b4_10px_12px,#cfcfcf_12px_16px,#aaa_16px_17px,#d0d0d0_17px_22px,#1d1d1d_22px_23px,#dcdcdc_23px_27px,#b9b9b9_27px_28px,#dcdcdc_28px_33px,#b9b9b9_33px_34px,#dcdcdc_34px_39px,#777_39px)]`}
          />
        </div>
        <svg width="23" height="260" className="font-bold" fontSize="8" fill="#8d989e">
          <rect width="23" height="260" rx="4" fill="#1f272a" />
          {METER_TICKS.map(([y, t]) => (
            <React.Fragment key={t}>
              <text x="12" y={y + 3} textAnchor="middle">{t}</text>
              <path d={`M3 ${y}.5h1`} stroke="#8d989e" />
            </React.Fragment>
          ))}
        </svg>
      </div>
      <div className="mt-[6px] grid h-[19px] w-[53px] grid-cols-2 gap-px overflow-hidden rounded-[3px] border border-[#1b2e3b] bg-[#1b2e3b] text-center text-[11px] leading-[17px] text-[#b9c6cf]">
        <span className="bg-[#2f4f64]">0.00</span>
        <span className="bg-[#44617a]">-oo</span>
      </div>
      <Quad className="mt-[5px] w-[53px]" cells={['R', 'W', 'rec', <Icon key="s" name="speaker" className="size-3" />]} />
      <div className="mt-[3px] h-[2px] w-[57px] bg-[#cbd6e6]" />
      <div className="flex h-[21px] w-[48px] items-center justify-between text-[12px] text-[#d5dde1]">
        <Piano className="h-3 w-[13px]" />
        <span>3</span>
      </div>
      <div className="h-[34px] w-[59px] bg-[#47a5de] pl-1 pt-px text-[11px] leading-[14px] text-[#0d1a24]">Chord Voice</div>
    </aside>
  );
}

function Section({ title, icon, className = '' }: { title: string; icon: string; className?: string }) {
  return (
    <button type="button" className={`flex h-[19px] w-[158px] items-center rounded-[3px] border border-[#8497a2] bg-[#6b828f] px-1 text-[12px] font-semibold leading-none text-[#15202a] ${className}`}>
      <Icon name="caret" className="mr-2 size-[9px]" />
      <span className="flex-1 text-left">{title}</span>
      <Icon name={icon} className="size-3" />
    </button>
  );
}

function Row({ icon, value, dim, extra, first, last }: { icon?: string; value: string; dim?: boolean; extra?: React.ReactNode; first?: boolean; last?: boolean }) {
  return (
    <div
      className={`flex h-5 w-[156px] items-stretch overflow-hidden border border-[#6a8291] bg-[#253b4b] text-[#d5dde1] ${dim ? 'text-[11px]' : 'text-[12px]'} ${first ? 'rounded-t-[3px]' : '-mt-px'} ${last ? 'rounded-b-[3px]' : ''}`}
    >
      {icon && <span className="ml-[3px] flex items-center"><Icon name={icon} className="size-3" /></span>}
      <Select label={value} value={value} className={`pl-1 ${dim ? 'italic [&>select]:text-[#8497a3]' : ''}`} />
      {extra}
    </div>
  );
}

function Extra({ children, label }: { children: React.ReactNode; label: string }) {
  return <button type="button" aria-label={label} className="flex w-6 items-center justify-center border-l border-[#6a8291] bg-[#4f697c]">{children}</button>;
}

function BottomTab({ children, active }: { children: React.ReactNode; active?: boolean }) {
  return <button type="button" className={`px-[19px] pt-[3px] text-[12px] font-semibold leading-none ${active ? 'rounded-b-[3px] bg-[#2f4f64] text-[#d5dde1]' : 'text-[#b9c5cd]'}`}>{children}</button>;
}

function Inspector() {
  return (
    <aside className={`${PANEL} flex w-[182px] shrink-0 flex-col`}>
      <div className="flex h-[22px] rounded-t-[3px] bg-[#273c52]">
        <h2 className="w-[98px] rounded-t-[3px] border-r border-[#385a70] bg-[#2f4f64] pl-[22px] pt-[3px] text-[12px] font-semibold leading-[16px] text-[#d5dde1]">Inspector</h2>
      </div>
      <div className="flex flex-1 flex-col pl-3 pt-2">
        <div className="flex h-[19px] w-[157px] gap-px rounded-[3px]">
          <button type="button" className="flex flex-1 items-center rounded-l-[3px] border border-[#8cc4e6] bg-[#47a5de] pl-[3px] text-[12px] font-semibold leading-none text-[#15232d]">
            <Icon name="caret" className="mr-2 size-[9px]" />Chord Voice
          </button>
          <Cell label="Edit channel" className="w-[19px] rounded-r-[3px] border border-[#8497a2] bg-[#6b828f] text-[#15202a]"><EditMark /></Cell>
        </div>
        <div className="mt-2 flex gap-[3px]">
          <div className="grid h-[38px] w-[64px] grid-cols-2 gap-px overflow-hidden rounded-[3px] border border-[#6a8291] bg-[#6a8291] text-[#dbe2e6]">
            <Cell className="bg-[#4f697c]">M</Cell>
            <Cell className="bg-[#4f697c]">S</Cell>
            <Cell label="Record enable" className="bg-[#e53838] text-[#2a0b0b]"><Icon name="circle" className="size-[10px]" /></Cell>
            <Cell label="Monitor" className="bg-[#4f697c]"><Icon name="speaker" className="size-3" /></Cell>
          </div>
          <div className="grid h-[38px] w-[89px] grid-cols-3 gap-px overflow-hidden rounded-[3px] border border-[#6a8291] bg-[#6a8291] text-[#dbe2e6]">
            <Cell className="bg-[#4f697c]">R</Cell>
            <Cell className="bg-[#4f697c]">W</Cell>
            <Cell className="bg-[#4f697c] text-[#8497a3]">L</Cell>
            <Cell label="Freeze" className="col-span-3 bg-[#4f697c]"><Icon name="star6" className="size-[11px]" /></Cell>
          </div>
        </div>
        <div className="mt-3 w-[156px] divide-y divide-[#6a8291] overflow-hidden rounded-[3px] border border-[#6a8291] bg-[#253b4b] text-[11px] text-[#d5dde1]">
          <label className="flex h-[18px] items-center pl-[3px] pr-1">
            <Icon name="ramp" className="mr-[5px] size-3" />
            <input type="range" aria-label="Volume" defaultValue={78} className={`h-[5px] w-[82px] appearance-none rounded-[2px] bg-[linear-gradient(90deg,#5ab4f5_0_75%,#4a5f6e_75%)] ${THUMB}`} />
            <span className="flex-1 text-right">0.00 dB</span>
          </label>
          <label className="flex h-[19px] items-center pl-[3px] pr-1">
            <Icon name="pan" className="mr-[5px] size-3" />
            <input type="range" aria-label="Pan" defaultValue={50} className={`h-[5px] w-[82px] appearance-none rounded-[2px] bg-[#4a5f6e] ${THUMB}`} />
            <span className="flex-1 text-right">C</span>
          </label>
          <div className="flex h-[19px] items-center pl-[3px] pr-1">
            <Icon name="delay" className="size-3" />
            <span className="flex-1 text-right">0.00 ms</span>
          </div>
        </div>
        <div className="mt-3"><Row first last dim icon="presetAdd" value="Track Presets..." /></div>
        <div className="mt-[11px] opacity-50"><Row first last dim icon="insertRec" value="Insert Recording..." /></div>
        <Section title="Routing" icon="route" className="-ml-px mt-[11px]" />
        <div className="mt-2">
          <Row first icon="enter" value="All MIDI Inputs" extra={<button type="button" aria-label="Input transformer" className="flex w-6 items-center justify-center border-l border-[#6a8291]"><Icon name="shuffle" className="size-3" /></button>} />
          <Row last icon="midi" value="Any Input" />
        </div>
        <div className="mt-[11px]">
          <Row first value="Elastic OSC" extra={<Extra label="Edit instrument"><Piano className="h-3 w-[13px]" /></Extra>} />
          <Row last icon="midi" value="Channel 2" extra={<Extra label="Programs"><Icon name="presets" className="size-[14px]" /></Extra>} />
        </div>
        <div className="mt-[6px]">
          <Row first dim value="Program Selector" />
          <Row last icon="drum" value="No Drum Map" />
        </div>
        <div className="mt-[11px]"><Row first last icon="exit" value="Melody Bus" /></div>
        <Section title="Quick Controls" icon="knob" className="-ml-px mt-3" />
        <div className="mt-2 flex h-[19px] w-[156px] gap-[3px] text-[#dbe2e6]">
          <Cell label="Enable" className="w-[19px] rounded-[3px] bg-[#dfe4e6] text-[#1d2529]"><Icon name="power" className="size-3" /></Cell>
          <Cell label="Learn" className="w-[19px] rounded-[3px] border border-[#6a8291] bg-[#4f697c]"><span className="font-['Liberation_Serif'] text-[16px] italic">L</span></Cell>
          <span className="flex-1" />
          <Cell label="Reset" className="w-[19px] rounded-[3px] border border-[#6a8291] bg-[#4f697c]"><Icon name="back" className="size-[14px]" /></Cell>
          <Cell label="Delete" className="w-[19px] rounded-[3px] border border-[#6a8291] bg-[#4f697c]"><Icon name="trash" className="size-3" /></Cell>
          <span className="flex-1" />
          <div className="flex w-[38px] divide-x divide-[#6a8291] overflow-hidden rounded-[3px] border border-[#6a8291] bg-[#4f697c]">
            <Cell className="flex-1">R</Cell>
            <Cell className="flex-1">W</Cell>
          </div>
        </div>
        <div className="mt-[5px] h-[19px] w-[156px] rounded-[2px] border border-[#1b2a35] bg-[#2a3f50]" />
      </div>
      <div className="flex h-5 rounded-b-[3px] bg-[#273c52]">
        <BottomTab active>Track</BottomTab>
        <BottomTab>Editor</BottomTab>
      </div>
    </aside>
  );
}

/* ------------------------------------------------------------------ */
/* Project window                                                      */
/* ------------------------------------------------------------------ */

function TrackRow({ track }: { track: Track }) {
  const selected = track.n === 3;
  const dark = track.n < 12 ? BLUE : ORANGE;
  return (
    <li className="flex h-[14px] overflow-hidden border-b border-[#23394a]">
      {!track.bus && <span className="h-[14px] w-[10px] shrink-0" style={{ background: dark }} />}
      <span className={`flex w-10 shrink-0 justify-between overflow-hidden text-[#10242b] ${track.bus ? 'pl-[2px] pr-1' : 'ml-px pl-1 pr-1'}`} style={{ background: track.color }}>
        {track.bus ? (
          <Icon name="folderOpen" className={`mt-[3px] size-4 ${track.n === 1 ? 'text-[#cfdbe3]' : ''}`} />
        ) : (
          <Piano className="mt-1 h-3 w-[13px]" />
        )}
        <span className="mt-[5px] text-[12px] leading-[13px]">{track.n}</span>
      </span>
      {!track.bus && <span className={`w-[3px] shrink-0 ${track.out ? 'bg-[#cdd6dc]' : ''}`} />}
      <span className={`flex w-[49px] shrink-0 border-x border-[#1b2e3b] ${track.bus ? 'ml-[5px]' : 'ml-[2px]'} ${selected ? 'bg-[#8b959d] text-[#14191c]' : 'bg-[#37556b] text-[#b0bec8]'}`}>
        <Cell className="flex-1">M</Cell>
        <Cell className="flex-1">S</Cell>
      </span>
      <span className={`flex-1 whitespace-nowrap pl-[9px] text-[13px] font-semibold ${track.bus ? 'leading-[16px]' : 'leading-[14px]'} ${selected ? 'bg-[#a0abb3] text-[#14191c]' : 'text-[#dbe2e6]'}`}>{track.name}</span>
      <span className="w-[11px] bg-black" />
    </li>
  );
}

function TrackList() {
  return (
    <section className="flex w-[350px] shrink-0 flex-col">
      <div className="flex h-[19px] w-[50px] items-center justify-around self-start rounded-[3px] border border-[#617b8c] bg-[#4f697c] text-[#dbe2e6]">
        <button type="button" aria-label="Add track"><Icon name="plus" className="size-[14px]" /></button>
        <button type="button" aria-label="Use track preset"><Icon name="presetAdd" className="size-[13px]" /></button>
      </div>
      <div className="mt-[5px] flex h-[21px] items-stretch border-y border-b-[#23394a] border-t-[#6a8291]">
        <span className="flex w-10 items-center bg-[#6b828f] pl-[3px] text-[#dbe2e6]"><Icon name="folder" className="h-4 w-[14px]" /></span>
        <span className="flex-1 pl-[10px] text-[12px] font-semibold leading-[20px] text-[#dbe2e6]">Input/Output</span>
        <span className="w-[11px] bg-black" />
      </div>
      <ul>
        {TRACKS.map(t => <TrackRow key={t.n} track={t} />)}
      </ul>
      <div className="flex-1" />
      <div className="flex h-[15px] items-center gap-[10px] px-2 text-[12px] leading-none text-[#a9b8c2]">
        <span className="flex-1">Recording</span>
        <Icon name="caretWide" className="size-[10px] text-[#7590a0]" />
        <Icon name="gear" className="size-[14px] text-[#7590a0]" />
      </div>
    </section>
  );
}

function Clip({ track, from, to }: { track: Track; from: number; to: number }) {
  return (
    <div
      className="absolute h-[11px] border border-black/40"
      style={{
        left: barX(from),
        width: barX(to) - barX(from) + 1,
        top: 60 + (track.n - 2) * 14,
        background: track.color,
        boxShadow: `inset 0 0 0 1px ${track.edge}`,
      }}
    >
      {BAR_LABELS.filter(b => b > from && b < to).map(b => (
        <i key={b} className="absolute top-px h-[7px] w-px bg-black/20" style={{ left: barX(b) - barX(from) - 1 }} />
      ))}
    </div>
  );
}

/** Musical canvas: everything here sits at its bar position */
function Arrangement() {
  const start = barX(1);
  const end = barX(119);
  return (
    <div className="relative h-[405px] flex-1 overflow-hidden bg-[#2c4a5e]">
      <div className="absolute inset-x-0 top-0 h-[25px] bg-[#202327]" />
      <div className="absolute top-0 h-[25px] bg-[#d6a500]" style={{ left: start, width: end - start }} />
      <div className="absolute bottom-0 top-[25px] bg-[#203542]" style={{ left: start, width: end - start }} />
      <div className="absolute inset-x-0 top-[44px] h-[295px] bg-[repeating-linear-gradient(#2a4252_0_1px,transparent_1px_14px)]" />
      {BAR_LABELS.map(b => (
        <div key={b} className="absolute inset-y-0 w-px bg-[#3a5d74]" style={{ left: barX(b) }}>
          <span className={`block h-6 w-px ${b > 119 ? 'bg-[#d5dde1]' : b > 1 ? 'bg-[#1c1a0a]' : ''}`} />
          <span className={`absolute left-[5px] top-[10px] text-[12px] font-bold leading-[14px] ${b > 119 ? 'text-[#dfe5e8]' : 'text-[#1f1a05]'}`}>{b}</span>
        </div>
      ))}
      <div className="absolute inset-x-0 top-[50px] h-[2px] bg-[#768590]" />
      <div className="absolute inset-x-0 top-[189px] h-[2px] bg-[#768590]" />
      <span className="absolute top-0 size-[9px] bg-white [clip-path:polygon(0_0,100%_0,0_100%)]" style={{ left: start }} />
      <span className="absolute top-0 size-[9px] bg-white [clip-path:polygon(0_0,100%_0,100%_100%)]" style={{ left: end - 9 }} />
      {TRACKS.map(t => t.clips.map(([a, b]) => <Clip key={`${t.n}-${a}`} track={t} from={a} to={b} />))}
      <div className="absolute inset-y-0 w-1 border-x border-white bg-[#101418]" style={{ left: barX(81) - 2 }} />
    </div>
  );
}

const BAR = 'rounded-[2px] bg-[#4d687b] text-[#e3e8ea]';

function ProjectZone() {
  return (
    <section className={`${PANEL} flex pb-1 pl-[5px] pr-1 pt-[5px]`}>
      <TrackList />
      <div className="mx-px flex w-[2px] items-center bg-[#7d909d]">
        <span className="h-6 w-[2px] bg-[repeating-linear-gradient(#dbe2e6_0_4px,#2f4f64_4px_6px)]" />
      </div>
      <div className="flex min-w-0 flex-1 flex-col">
        <div className="flex">
          <Arrangement />
          <div className="ml-px flex w-3 flex-col items-center gap-[3px]">
            <button type="button" aria-label="Ruler menu" className={`${BAR} flex h-[22px] w-3 items-center justify-center border border-[#6a8291]`}><Icon name="caret" className="size-[9px]" /></button>
            <button type="button" aria-label="Edit" className={`${BAR} flex h-3 w-3 items-center justify-center`}><Icon name="draw" className="size-2" /></button>
            <div className={`${BAR} relative h-[48px] w-3`}>
              <span className="absolute inset-y-[5px] left-[5px] w-[2px] bg-[#8799a5]" />
              <span className="absolute bottom-[2px] left-[2px] size-2 rounded-full bg-white" />
            </div>
            <div className={`${BAR} flex w-3 flex-1 flex-col items-center justify-between py-1 text-[#72899a]`}>
              <svg viewBox="0 0 8 5" className="w-[7px]" fill="none" stroke="currentColor"><path d="M1 4l3-3 3 3" /></svg>
              <svg viewBox="0 0 8 5" className="w-[7px]" fill="none" stroke="currentColor"><path d="M1 1l3 3 3-3" /></svg>
            </div>
            <button type="button" aria-label="Zoom presets" className={`${BAR} flex h-3 w-3 items-center justify-center`}><Icon name="caret" className="size-2" /></button>
            <div className={`${BAR} flex h-[84px] w-3 flex-col items-center py-[3px]`}>
              <Icon name="minus" className="size-[10px]" />
              <span className="mt-px size-2 shrink-0 rounded-full bg-white" />
              <span className="w-[2px] flex-1 bg-[#8799a5]" />
              <Icon name="plus" className="mt-1 size-[10px]" />
            </div>
          </div>
        </div>
        <div className="mr-3 flex h-3 gap-[2px]">
          <div className={`${BAR} flex flex-1 items-center gap-1 px-[5px]`}>
            <svg viewBox="0 0 5 8" className="h-2 w-[5px]" fill="none" stroke="currentColor" strokeWidth="1.500"><path d="M4 1 1 4l3 3" /></svg>
            <div className="ml-1 h-2 flex-1 rounded-[2px] bg-[#62798a]"><div className="h-2 w-[41%] rounded-[2px] bg-[#f3f5f6]" /></div>
            <svg viewBox="0 0 5 8" className="ml-1 h-2 w-[5px]" fill="none" stroke="currentColor" strokeWidth="1.500"><path d="M1 1l3 3-3 3" /></svg>
          </div>
          <button type="button" aria-label="Zoom menu" className={`${BAR} flex w-3 items-center justify-center`}><Icon name="caret" className="size-2" /></button>
          <label className={`${BAR} flex w-[84px] items-center gap-1 px-[2px]`}>
            <Icon name="minus" className="size-[10px]" />
            <input type="range" aria-label="Horizontal zoom" defaultValue={14} className="h-[2px] min-w-0 flex-1 appearance-none bg-[#8799a5] [&::-webkit-slider-thumb]:size-2 [&::-webkit-slider-thumb]:appearance-none [&::-webkit-slider-thumb]:rounded-full [&::-webkit-slider-thumb]:bg-white" />
            <Icon name="plus" className="size-[10px]" />
          </label>
        </div>
      </div>
    </section>
  );
}

/* ------------------------------------------------------------------ */
/* MixConsole                                                          */
/* ------------------------------------------------------------------ */

const THUMB_TONE = {
  white: '[&::-webkit-slider-thumb]:bg-[linear-gradient(#7e7e7e_0_3px,#c6c6c6_3px_11px,#8a8a8a_11px_12px,#dedede_12px_21px,#777_21px)]',
  red: '[&::-webkit-slider-thumb]:bg-[linear-gradient(#8c1414_0_3px,#e23535_3px_11px,#8f2020_11px_12px,#f26060_12px_21px,#8c1414_21px)]',
  grey: '[&::-webkit-slider-thumb]:bg-[linear-gradient(#3c4249_0_3px,#6c737b_3px_11px,#454a50_11px_12px,#7f868d_12px_21px,#3c4249_21px)]',
};

function ChannelStrip({ s }: { s: Strip }) {
  const sel = s.n === 3;
  const io = s.kind === 'in' || s.kind === 'out';
  const tone = io ? THUMB_TONE.red : s.kind === 'bus' ? THUMB_TONE.grey : THUMB_TONE.white;
  const well = sel ? 'bg-[#343839] border-[#2a2d2e]' : 'bg-[#1f272a] border-[#192126]';
  const rows = io || s.kind === 'bus' ? ['R', 'W', '', ''] : ['R', 'W', sel ? 'rec' : <Icon key="c" name="circle" className="size-[10px]" />, <Icon key="s" name="speaker" className="size-3" />];
  // the folder colour runs on below the neighbouring strips of the same bus
  const runsOn = s.folder && s.n !== 10 && s.n !== 14;
  return (
    <article className={`flex w-[91px] shrink-0 flex-col border-r-2 border-[#1b2e3b] ${sel ? 'bg-[#a0abb3] text-[#14191c]' : 'text-[#b9c6cf]'}`}>
      <div className="h-[10px] overflow-hidden px-[2px]">
        <div className={`flex h-5 items-start justify-between rounded-t-[3px] border px-[4px] pt-px text-[12px] font-semibold leading-[16px] ${sel ? 'border-[#3d474e] bg-[#868f96]' : 'border-[#1b2e3b] bg-[#587082]'}`}>
          <span>Routing</span>
          <Icon name="routeSmall" className="mt-px size-[11px]" />
        </div>
      </div>
      <div className="h-[2px] bg-[#7b8f9c]" />
      <div className="flex flex-col pl-[3px] pr-[2px] pt-[3px]">
        <Quad light={sel} cells={['M', s.kind === 'in' ? '' : 'S', '', <EditMark key="e" />]} />
        <div className={`mx-px mt-[6px] flex h-[17px] flex-col items-center rounded-[4px] border pt-px text-[10px] font-semibold leading-[12px] text-[#e8ecee] ${well}`}>
          <i className="h-[2px] w-1 shrink-0 bg-[#eceff0]" />
          {s.kind === 'in' ? 'L2' : 'C'}
        </div>
        <div className="mx-px mt-2 flex h-[79px] gap-1">
          <div className={`grid flex-1 rounded-[4px] ${well}`}>
            <svg width="39" height="79" className="[grid-area:1/1]" fontSize="8" fontWeight="700" fill="#a9b2b7">
              <path d="M6 3v75" stroke="#07090b" strokeWidth="2" />
              <path d="M10 9.500h17M10 34.500h17M10 42.500h17M10 49.500h17M10 54.500h17M10 61.500h17M10 70.500h17" stroke="#5a6469" />
              <path d="M10 22.500h17" stroke="#9aa4a9" />
              <text x="38" y="12" textAnchor="end">6</text>
              <text x="38" y="25" textAnchor="end">0</text>
              <text x="38" y="37" textAnchor="end">5</text>
              <text x="38" y="73" textAnchor="end">00</text>
            </svg>
            <input type="range" aria-label={`${s.name} volume`} defaultValue={s.level ?? 84} className={`ml-px mt-[2px] h-[75px] w-[10px] [grid-area:1/1] ${VERTICAL} [&::-webkit-slider-thumb]:h-6 [&::-webkit-slider-thumb]:w-[10px] ${tone}`} />
          </div>
          <div className={`flex flex-1 flex-col justify-between rounded-[4px] px-[3px] pb-2 pt-[13px] ${well}`}>
            <span className="h-px bg-[#5d676b]" />
            {io && <span className="h-px bg-[repeating-linear-gradient(90deg,#2bb6dd_0_15px,transparent_15px_16px)]" />}
          </div>
        </div>
        <div className={`mt-[6px] grid h-[19px] grid-cols-2 gap-px overflow-hidden rounded-[3px] border text-center text-[11px] leading-[17px] ${sel ? 'border-[#5d676e] bg-[#5d676e]' : 'border-[#1b2e3b] bg-[#1b2e3b]'}`}>
          <span className={sel ? 'bg-[#a0abb3]' : 'bg-[#2f4f64]'}>{s.gain ?? '0.00'}</span>
          <span className={sel ? 'bg-[#929ba3]' : 'bg-[#44617a]'}>{s.peak ?? '-oo'}</span>
        </div>
        <Quad light={sel} className="mt-[5px]" cells={rows} />
      </div>
      <div className={`mt-[3px] h-[2px] ${s.line ? 'bg-[#cbd6e6]' : ''}`} />
      <div className="flex h-[21px] items-center px-1 text-[12px]">
        {io ? <Icon name={s.kind === 'in' ? 'enter' : 'exit'} className="size-[13px]" /> : s.kind === 'bus' ? (
          <><Icon name="folderOpen" /><Icon name="infinity" className="ml-[7px] size-[13px]" /></>
        ) : <Piano className="h-3 w-[13px]" />}
        <span className="flex-1 text-right">{s.n}</span>
      </div>
      <div
        className={`flex h-[34px] items-center pl-1 leading-[14px] ${s.size ?? 'text-[12px]'} ${s.text ?? 'text-[#101a22]'} ${sel ? 'border-b-[6px] border-[#47a5de]' : 'pb-[5px]'}`}
        style={{ background: s.color }}
      >
        {s.name}
      </div>
      <div
        className={`relative h-[10px] ${runsOn ? '-mr-[2px]' : ''} ${s.folder && s.kind !== 'bus' ? 'border-t border-black' : ''}`}
        style={{ background: s.folder ?? s.color }}
      />
    </article>
  );
}

function MixToolbar() {
  return (
    <div className="flex h-[38px] items-start border-b border-[#6a8291] pt-2 text-[13px] text-[#d5dde1]">
      <div className="flex-[15]" />
      <div className="flex gap-[5px]">
        <div className={`${FRAME} bg-[#253b4b]`}><Tool icon="filter" label="Filter channels" /></div>
        <Group>
          <Tool icon="narrow" label="Narrower" />
          <Tool icon="widen" label="Wider" />
          <span className="flex w-[38px] items-center justify-center bg-[#253b4b]">14</span>
          <Tool icon="hourglass" label="Shorter" />
          <Tool icon="updown" label="Taller" />
        </Group>
      </div>
      <div className="flex flex-[19] justify-end gap-[5px]">
        <div className={`${FRAME} bg-[#253b4b]`}><Tool icon="gear" label="Functions" /></div>
        <Group>
          <Tool icon="zoneGear" label="Layout" className="w-[25px] bg-[#253b4b]" />
          <Tool icon="popout" label="Open in window" />
        </Group>
        <Group><button type="button" className="w-[63px]">Q-Link</button></Group>
      </div>
    </div>
  );
}

const LOWER_TABS = ['Editor', 'Sampler Control', 'Chord Pads', 'MIDI Remote'];

function LowerZone() {
  return (
    <section className={`${PANEL} flex flex-1 flex-col overflow-hidden`}>
      <div className="flex flex-1 flex-col pl-2 pr-[9px]">
        <MixToolbar />
        <div className="mt-1 flex gap-[2px]">
          <div className="flex min-w-0 flex-1 overflow-hidden">
            <ChannelStrip s={STEREO_IN} />
            <div className="w-[14px] shrink-0 border-r-2 border-[#1b2e3b] pt-[10px]"><div className="h-[2px] bg-[#7b8f9c]" /></div>
            {STRIPS.map(s => <ChannelStrip key={s.n} s={s} />)}
            <div className="min-w-0 flex-1 border-r-2 border-[#1b2e3b] pt-[10px]"><div className="h-[2px] bg-[#7b8f9c]" /></div>
            <ChannelStrip s={STEREO_OUT} />
            <div className="w-[15px] shrink-0 pt-[10px]"><div className="h-[2px] bg-[#7b8f9c]" /></div>
          </div>
          <div className={`${BAR} flex w-3 flex-col items-center py-[5px]`}>
            <svg viewBox="0 0 8 5" className="w-[7px]" fill="none" stroke="currentColor" strokeWidth="1.500"><path d="M1 4l3-3 3 3" /></svg>
            <span className="mt-2 h-7 w-2 rounded-[2px] bg-[#f3f5f6]" />
            <span className="flex-1" />
            <svg viewBox="0 0 8 5" className="w-[7px]" fill="none" stroke="currentColor" strokeWidth="1.500"><path d="M1 1l3 3 3-3" /></svg>
          </div>
        </div>
        <div className={`${BAR} mr-[14px] mt-[2px] flex h-3 items-center px-1`}>
          <svg viewBox="0 0 5 8" className="h-2 w-[5px]" fill="none" stroke="currentColor" strokeWidth="1.500"><path d="M4 1 1 4l3 3" /></svg>
          <div className="mx-2 flex-1 pl-[129px]"><div className="h-2 w-[63%] rounded-[2px] bg-[#f3f5f6]" /></div>
          <svg viewBox="0 0 5 8" className="h-2 w-[5px]" fill="none" stroke="currentColor" strokeWidth="1.500"><path d="M1 1l3 3-3 3" /></svg>
        </div>
      </div>
      <div className="flex h-5 items-stretch bg-[#273c52] text-[12px] font-semibold leading-none text-[#b9c5cd]">
        <button type="button" aria-label="Close lower zone" className="flex w-[18px] items-center justify-center pt-[3px]"><Icon name="close" className="size-[10px]" /></button>
        <button type="button" className="w-[108px] rounded-b-[3px] bg-[#2f4f64] pt-[3px] text-[#d5dde1]">MixConsole</button>
        {LOWER_TABS.map((t, i) => (
          <React.Fragment key={t}>
            <button type="button" className="px-[19px] pt-[3px]">{t}</button>
            {i < 3 && <span className="my-[3px] w-px bg-[#46627a]" />}
          </React.Fragment>
        ))}
      </div>
    </section>
  );
}

/* ------------------------------------------------------------------ */
/* Right zone                                                          */
/* ------------------------------------------------------------------ */

const MEDIA: [string, React.ReactNode][] = [
  ['VST Instruments', <Piano key="i" className="h-[38px] w-[41px]" />],
  ['VST Effects', <span key="i" className="font-['Open_Sans'] text-[42px] font-semibold leading-none">FX</span>],
  ['Loops & Samples', (
    <svg key="i" viewBox="0 0 44 40" className="h-10 w-[44px]" fill="none">
      <path d="M7 5h15a15 15 0 1 1-14.500 19" stroke="currentColor" strokeWidth="6" />
      <path d="M8 11l8 13H0z" fill="currentColor" />
    </svg>
  )],
  ['Presets', (
    <svg key="i" viewBox="0 0 48 38" className="h-[38px] w-[48px]" fill="currentColor">
      <path d="M8 0h14l8 13-8 13H8L0 13zM33 20h9l5 9-5 9h-9l-5-9z" />
    </svg>
  )],
  ['User Presets', (
    <svg key="i" viewBox="0 0 40 40" className="size-10" fill="currentColor">
      <path d="M9 1h12l7 12-7 12H9L2 13z" />
      <g stroke="#4f697c" strokeWidth="2">
        <circle cx="29" cy="19" r="7.500" />
        <path d="M18 40v-6c0-5 4-8 11-8s11 3 11 8v6z" />
      </g>
    </svg>
  )],
  ['File Browser', (
    <svg key="i" viewBox="0 0 48 34" className="h-[34px] w-[48px]" fill="currentColor">
      <rect x="1" width="46" height="18" rx="3" />
      <circle cx="35" cy="9" r="2" fill="#4f697c" />
      <circle cx="42" cy="9" r="2" fill="#4f697c" />
      <circle cx="18" cy="18" r="11" fill="#4f697c" />
      <circle cx="18" cy="18" r="7" fill="none" stroke="currentColor" strokeWidth="4" />
      <path d="M23 24l8 8" stroke="currentColor" strokeWidth="5" />
    </svg>
  )],
  ['Favorites', (
    <svg key="i" viewBox="0 0 44 42" className="h-[42px] w-[44px]" fill="currentColor" stroke="currentColor" strokeWidth="2" strokeLinejoin="round">
      <path d="M22 1l5 14 15 1-11 10 4 14-13-8-13 8 4-14L2 16l15-1z" />
    </svg>
  )],
];

function MediaZone() {
  return (
    <aside className={`${PANEL} flex w-[229px] shrink-0 flex-col`}>
      <div className="flex h-[22px] rounded-t-[3px] bg-[#273c52] text-[12px] font-semibold leading-none">
        <button type="button" className="w-[68px] text-[#c3ced5]">VSTi</button>
        <button type="button" className="w-[81px] rounded-t-[3px] bg-[#2f4f64] text-[#d5dde1]">Media</button>
      </div>
      <div className="pl-[9px] pr-2">
        <div className="mt-2 flex h-[19px] gap-[3px]">
          <label className="flex min-w-0 flex-1 items-center gap-1 rounded-[3px] border border-[#6a8291] bg-[#253b4b] pl-[2px] text-[#d5dde1]">
            <Icon name="search" className="size-3" />
            <input type="search" aria-label="Search" placeholder="Search" className="min-w-0 flex-1 bg-transparent text-[11px] outline-none placeholder:italic placeholder:text-[#8497a3]" />
          </label>
          <button type="button" aria-label="Results view" className="flex w-6 items-center justify-center rounded-[3px] border border-[#6a8291] bg-[#4f697c] text-[#dbe2e6]"><Icon name="list" className="h-[11px] w-[14px]" /></button>
        </div>
        <div className="mt-[5px] flex h-[19px] items-center gap-2 text-[#dbe2e6]">
          <button type="button" aria-label="Back" className="flex size-[19px] items-center justify-center rounded-[3px] border border-[#3d5c70]"><Icon name="arrowLeft" className="size-3" /></button>
          <button type="button" aria-label="Home"><Icon name="home" className="size-4" /></button>
        </div>
        <div className="mt-2 h-px bg-[#6a8291]" />
        <div className="mt-[26px] grid grid-cols-[104px_104px] gap-y-[25px]">
          {MEDIA.map(([label, art]) => (
            <button key={label} type="button" className="flex h-[95px] flex-col items-center text-[12px] text-[#d5dde1]">
              <span className="flex size-[69px] items-center justify-center rounded-[4px] border border-[#5f798a] bg-[#4f697c] text-[#dde3e6]">{art}</span>
              <span className="mt-1 whitespace-nowrap leading-[18px]">{label}</span>
            </button>
          ))}
        </div>
      </div>
    </aside>
  );
}

/* ------------------------------------------------------------------ */
/* Transport                                                           */
/* ------------------------------------------------------------------ */

function Mode({ icon, label }: { icon: string; label: string }) {
  return (
    <button type="button" aria-label={label} className={`${FRAME} w-[44px] items-center justify-around bg-[#253b4b] px-[3px] text-[#dbe2e6]`}>
      <Icon name={icon} className="size-[15px]" />
      <Icon name="caret" className="size-[11px]" />
    </button>
  );
}

function Transport() {
  return (
    <footer className="mt-[5px] flex h-10 items-center gap-[5px] overflow-hidden bg-[#2f4f64] px-1 pb-px text-[13px] text-[#d5dde1]">
      <Group><Tool icon="delay" label="Constrain delay" /></Group>
      <Mode icon="circle" label="Record mode" />
      <Dots />
      <Mode icon="wave" label="Audio record mode" />
      <Dots />
      <Mode icon="midi" label="MIDI record mode" />
      <Dots />
      <Group><button type="button" className="w-[38px] text-[14px] font-semibold leading-none">AQ</button></Group>
      <div className={`${FRAME} ml-[5px] w-[140px] flex-col justify-center gap-1 px-[3px]`}>
        <span className="h-2 bg-[linear-gradient(90deg,#dbe2e6_0_10px,#4a5c69_10px)]" />
        <span className="h-2 bg-[#4a5c69]" />
      </div>
      <div className={`${FRAME} -ml-[2px] w-[13px] flex-col justify-center gap-1 px-[3px]`}>
        <span className="h-2 bg-[#4a5c69]" />
        <span className="h-2 bg-[#4a5c69]" />
      </div>
      <div className="ml-[9px]"><Time icon="left" label="Left locator" parts={['1.', '1.', '1.', '0']} /></div>
      <div className="ml-[5px]"><Time icon="right" label="Right locator" parts={['119.', '1.', '1.', '0']} /></div>
      <Time icon="both" label="Locator range" parts={['118.', '0.', '0.', '0']} />
      <Group><Tool icon="punchIn" label="Punch in" /><Tool icon="punchOut" label="Punch out" /></Group>
      <div className="flex h-8 w-[200px] shrink-0 overflow-hidden rounded-[3px] border-2 border-[#c8d2d8] bg-[#6c838f] text-[#1b2227]">
        <button type="button" aria-label="Cycle" className="flex w-12 items-center justify-center bg-[#8571e3]"><Icon name="cycle" className="size-5" /></button>
        <button type="button" aria-label="Stop" className="flex w-[50px] items-center justify-center bg-[#a3a9ad]"><Icon name="stop" /></button>
        <button type="button" aria-label="Play" className="flex flex-1 items-center justify-center"><Icon name="play" /></button>
        <button type="button" aria-label="Record" className="flex flex-1 items-center justify-center"><Icon name="record" /></button>
      </div>
      <Dots />
      <Group><button type="button" aria-label="Insert recording" className="flex w-[38px] items-center justify-center text-[#8497a3]"><Icon name="insertRec" className="size-[14px]" /></button></Group>
      <div className={`${FRAME} w-[150px] bg-[#253b4b]`}>
        <span className="flex w-[25px] items-center justify-center border-r border-[#6a8291]"><Icon name="note" className="size-[14px]" /></span>
        <div aria-label="Song position" className="flex flex-1 items-center justify-end gap-[9px] pr-[7px] text-[15px] leading-none">
          <span>81.</span><span>1.</span><span>1.</span><span className="ml-1">0</span>
        </div>
      </div>
      <Dots />
      <Group className="pl-1">
        {['1', '2', '3', '4'].map(m => (
          <button key={m} type="button" aria-label={`Marker ${m}`} className="relative flex w-[25px] items-center">
            <span className="flex h-[15px] w-[17px] items-center justify-center bg-[#dbe2e6] pr-px text-[13px] font-bold leading-none text-[#3e5a6d] [clip-path:polygon(0_0,82%_0,100%_100%,0_100%)]">{m}</span>
            <span className="absolute bottom-0 left-1 h-1 w-2 bg-[#2f4f64] [clip-path:polygon(50%_0,100%_100%,0_100%)]" />
          </button>
        ))}
        <Cell label="Edit markers" className="w-[15px] text-[#dbe2e6]"><EditMark /></Cell>
      </Group>
      <Dots />
      <Group><Tool icon="markPlay" label="Play from marker" /><Tool icon="markBars" label="Loop bars" /></Group>
      <Dots />
      <div className={`${FRAME} w-[111px] bg-[#253b4b]`}>
        <Tool icon="tempo" label="Tempo track" on />
        <span className="flex flex-1 items-center justify-end pr-2 text-[12px]">120.000</span>
        <Icon name="updown" className="mr-[7px] h-4 w-[10px] self-center" />
        <span className="w-1 bg-[#4f697c]" />
      </div>
      <Group><Tool icon="precount" label="Precount" className="w-[23px]" /><Tool icon="gear" label="Precount setup" className="w-[21px] border-l border-[#6a8291]" /></Group>
      <Group><Tool icon="metronome" label="Metronome" className="w-[23px]" /><Tool icon="gear" label="Metronome setup" className="w-[21px] border-l border-[#6a8291]" /></Group>
      <Dots />
      <div className={`${FRAME} min-w-0 flex-1 items-stretch bg-[#253b4b] text-[12px]`}>
        <span className="w-[26px] border-r border-[#4a6272]" />
        <span className="flex-1 border-r border-[#4a6272]" />
        <span className="flex items-center gap-[6px] pl-[7px] pr-1">-3.16 <Icon name="tri" className="size-[9px]" /></span>
      </div>
      <Dots />
    </footer>
  );
}

export default function App() {
  return (
    <div className="flex min-h-screen w-full flex-col overflow-hidden bg-[#253b4a] font-['Noto_Sans',sans-serif]">
      <TitleBar />
      <Toolbar />
      <div className="flex h-10 items-center justify-center bg-[#1f3341] pl-[6px] pt-[3px] text-[12px] font-semibold text-[#b7c3cb]">No Object Selected</div>
      <Overview />
      <main className="mt-[5px] flex flex-1 gap-1 pl-1 pr-[5px]">
        <ChannelZone />
        <Inspector />
        <div className="flex min-w-0 flex-1 flex-col gap-[5px]">
          <ProjectZone />
          <LowerZone />
        </div>
        <MediaZone />
      </main>
      <Transport />
    </div>
  );
}
